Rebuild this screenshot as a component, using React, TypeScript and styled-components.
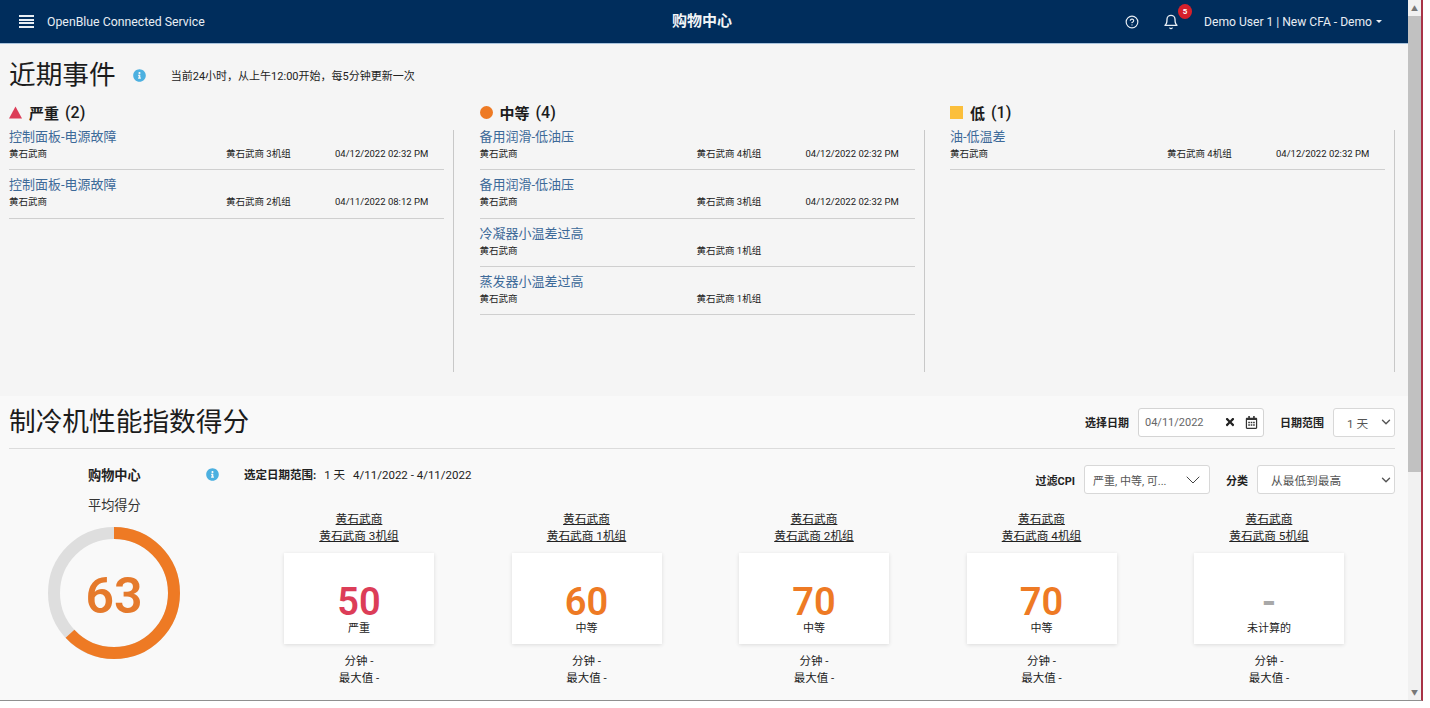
import React from 'react'
import styled, { createGlobalStyle } from 'styled-components'
import { ChevronDown } from 'lucide-react'
import { FaInfoCircle, FaRegCalendarAlt, FaTimes } from 'react-icons/fa'
import { FiBell, FiHelpCircle } from 'react-icons/fi'

const GlobalStyle = createGlobalStyle`
    html, body {
        margin: 0;
        padding: 0;
        height: 708px;
        overflow: hidden;
        background: #fff;
        font-family: Roboto, "Noto Sans CJK SC", sans-serif;
        color: #222;
    }
    * { box-sizing: border-box; }
`

type Level = 'high' | 'medium' | 'low' | 'none'

const levelColor: Record<Level, string> = {
    high: '#dc3d58',
    medium: '#ee7a24',
    low: '#fbbf3c',
    none: '#a8a8a8',
}

const columns = [
    {
        level: 'high' as Level,
        title: '严重',
        count: 2,
        events: [
            { name: '控制面板-电源故障', unit: '黄石武商 3机组', time: '04/12/2022 02:32 PM' },
            { name: '控制面板-电源故障', unit: '黄石武商 2机组', time: '04/11/2022 08:12 PM' },
        ],
    },
    {
        level: 'medium' as Level,
        title: '中等',
        count: 4,
        events: [
            { name: '备用润滑-低油压', unit: '黄石武商 4机组', time: '04/12/2022 02:32 PM' },
            { name: '备用润滑-低油压', unit: '黄石武商 3机组', time: '04/12/2022 02:32 PM' },
            { name: '冷凝器小温差过高', unit: '黄石武商 1机组', time: '' },
            { name: '蒸发器小温差过高', unit: '黄石武商 1机组', time: '' },
        ],
    },
    {
        level: 'low' as Level,
        title: '低',
        count: 1,
        events: [{ name: '油-低温差', unit: '黄石武商 4机组', time: '04/12/2022 02:32 PM' }],
    },
]

const chillers = [
    { unit: '黄石武商 3机组', score: '50', label: '严重', level: 'high' as Level },
    { unit: '黄石武商 1机组', score: '60', label: '中等', level: 'medium' as Level },
    { unit: '黄石武商 2机组', score: '70', label: '中等', level: 'medium' as Level },
    { unit: '黄石武商 4机组', score: '70', label: '中等', level: 'medium' as Level },
    { unit: '黄石武商 5机组', score: '-', label: '未计算的', level: 'none' as Level },
]

function LevelMark({ level }: { level: Level }) {
    return (
        <svg width="13" height="13" viewBox="0 0 13 13">
            {level === 'high' && <polygon points="6.5,0.5 13,12.5 0,12.5" fill={levelColor.high} />}
            {level === 'medium' && <circle cx="6.5" cy="6.5" r="6.5" fill={levelColor.medium} />}
            {level === 'low' && <rect width="13" height="13" fill={levelColor.low} />}
        </svg>
    )
}

function ScoreRing({ score }: { score: number }) {
    const r = 60
    const length = 2 * Math.PI * r
    return (
        <RingBox>
            <svg width="134" height="134" viewBox="0 0 134 134">
                <circle cx="67" cy="67" r={r} fill="none" stroke="#dedede" strokeWidth="12" />
                <circle
                    cx="67"
                    cy="67"
                    r={r}
                    fill="none"
                    stroke={levelColor.medium}
                    strokeWidth="12"
                    strokeDasharray={`${(length * score) / 100} ${length}`}
                    transform="rotate(-90 67 67)"
                />
            </svg>
            <RingValue>{score}</RingValue>
        </RingBox>
    )
}

export default function App() {
    return (
        <>
            <GlobalStyle />
            <Frame>
                <Page>
                    <Header>
                        <HeaderLeft>
                            <Burger>
                                <span />
                                <span />
                                <span />
                                <span />
                            </Burger>
                            <Brand>OpenBlue Connected Service</Brand>
                        </HeaderLeft>
                        <HeaderTitle>购物中心</HeaderTitle>
                        <HeaderRight>
                            <FiHelpCircle size={14} />
                            <BellBox>
                                <FiBell size={16} />
                                <Badge>5</Badge>
                            </BellBox>
                            <UserName>
                                Demo User 1 | New CFA - Demo
                                <Caret />
                            </UserName>
                        </HeaderRight>
                    </Header>

                    <EventsSection>
                        <TitleRow>
                            <BigTitle>近期事件</BigTitle>
                            <TitleInfo />
                            <Note>{'当前24小时\uFF0C从上午12:00开始\uFF0C每5分钟更新一次'}</Note>
                        </TitleRow>
                        <EventColumns>
                            {columns.map((col) => (
                                <EventColumn key={col.level}>
                                    <ColumnHead>
                                        <LevelMark level={col.level} />
                                        <ColumnTitle>{col.title}</ColumnTitle>
                                        <ColumnCount>({col.count})</ColumnCount>
                                    </ColumnHead>
                                    <EventList>
                                        {col.events.map((ev, i) => (
                                            <EventRow key={i}>
                                                <EventName>{ev.name}</EventName>
                                                <EventMeta>
                                                    <span>黄石武商</span>
                                                    <span>{ev.unit}</span>
                                                    <span>{ev.time}</span>
                                                </EventMeta>
                                            </EventRow>
                                        ))}
                                    </EventList>
                                </EventColumn>
                            ))}
                        </EventColumns>
                    </EventsSection>

                    <ScoreSection>
                        <ScoreHead>
                            <BigTitle>制冷机性能指数得分</BigTitle>
                            <Controls>
                                <ControlLabel>选择日期</ControlLabel>
                                <DateBox>
                                    <DateText>04/11/2022</DateText>
                                    <FaTimes size={12} color="#222" />
                                    <FaRegCalendarAlt size={13} color="#333" />
                                </DateBox>
                                <ControlLabel>日期范围</ControlLabel>
                                <SelectBox $width={62}>
                                    <span>1 天</span>
                                    <ChevronDown size={14} strokeWidth={2.4} color="#555" />
                                </SelectBox>
                            </Controls>
                        </ScoreHead>
                        <ScoreBody>
                            <Summary>
                                <SummaryTop>
                                    <SummaryName>购物中心</SummaryName>
                                    <InfoIcon />
                                </SummaryTop>
                                <SummarySub>平均得分</SummarySub>
                                <ScoreRing score={63} />
                            </Summary>
                            <Details>
                                <DetailsBar>
                                    <RangeText>
                                        <b>选定日期范围:</b>
                                        <span>1 天</span>
                                        <span>4/11/2022 - 4/11/2022</span>
                                    </RangeText>
                                    <Controls>
                                        <ControlLabel>过滤CPI</ControlLabel>
                                        <FilterBox>
                                            <span>严重, 中等, 可...</span>
                                            <ChevronDown size={24} strokeWidth={1} color="#444" />
                                        </FilterBox>
                                        <ControlLabel>分类</ControlLabel>
                                        <SelectBox $width={138}>
                                            <span>从最低到最高</span>
                                            <ChevronDown size={14} strokeWidth={2.4} color="#555" />
                                        </SelectBox>
                                    </Controls>
                                </DetailsBar>
                                <ChillerRow>
                                    {chillers.map((c) => (
                                        <Chiller key={c.unit}>
                                            <ChillerLink>
                                                黄石武商
                                                <br />
                                                {c.unit}
                                            </ChillerLink>
                                            <ScoreCard>
                                                <CardValue $level={c.level}>{c.score}</CardValue>
                                                <CardLabel>{c.label}</CardLabel>
                                            </ScoreCard>
                                            <ChillerStats>
                                                分钟 -
                                                <br />
                                                最大值 -
                                            </ChillerStats>
                                        </Chiller>
                                    ))}
                                </ChillerRow>
                            </Details>
                        </ScoreBody>
                    </ScoreSection>
                </Page>
                <Scrollbar>
                    <ScrollArrow>▲</ScrollArrow>
                    <ScrollThumb />
                    <ScrollTrack />
                    <ScrollArrow>▼</ScrollArrow>
                </Scrollbar>
            </Frame>
        </>
    )
}

const Frame = styled.div`
    width: 1423px;
    height: 701px;
    display: flex;
    border-right: 2px solid #a83246;
    border-bottom: 1px solid #8f8f8f;
    overflow: hidden;
`

const Page = styled.div`
    width: 1408px;
    flex-shrink: 0;
    display: flex;
    flex-direction: column;
    overflow: hidden;
`

const Scrollbar = styled.div`
    flex: 1;
    display: flex;
    flex-direction: column;
    background: #f1f1f1;
`

const ScrollArrow = styled.div`
    height: 16px;
    display: flex;
    align-items: center;
    justify-content: center;
    font-size: 7px;
    color: #777;
`

const ScrollThumb = styled.div`
    height: 456px;
    background: #c1c1c1;
`

const ScrollTrack = styled.div`
    flex: 1;
`

const Header = styled.header`
    height: 44px;
    flex-shrink: 0;
    position: relative;
    display: flex;
    align-items: center;
    justify-content: space-between;
    padding: 0 26px 0 19px;
    background: #002d5c;
    border-bottom: 1px solid #a9c3dc;
    color: #e8eef4;
`

const HeaderLeft = styled.div`
    display: flex;
    align-items: center;
    gap: 13px;
`

const Burger = styled.div`
    width: 15px;
    display: flex;
    flex-direction: column;
    gap: 1.4px;

    span {
        height: 2px;
        background: #e8eef4;
    }
`

const Brand = styled.div`
    font-size: 12.3px;
    white-space: nowrap;
`

const HeaderTitle = styled.div`
    position: absolute;
    left: 0;
    right: 4px;
    top: 11px;
    text-align: center;
    font-size: 15px;
    line-height: 20px;
    font-weight: 700;
    color: #f1f4f7;
    pointer-events: none;
`

const HeaderRight = styled.div`
    display: flex;
    align-items: center;
    position: relative;
`

const BellBox = styled.div`
    position: relative;
    display: flex;
    margin: 0 25px 0 24px;
`

const Badge = styled.span`
    position: absolute;
    top: -10px;
    right: -13px;
    width: 14px;
    height: 15px;
    border-radius: 50%;
    background: #d6202b;
    color: #fff;
    font-size: 8px;
    font-weight: 700;
    text-align: center;
    line-height: 15px;
`

const UserName = styled.div`
    display: flex;
    align-items: center;
    gap: 4px;
    font-size: 12.1px;
    white-space: nowrap;
`

const Caret = styled.i`
    width: 0;
    height: 0;
    border-left: 3.5px solid transparent;
    border-right: 3.5px solid transparent;
    border-top: 3.5px solid #e8eef4;
`

const EventsSection = styled.section`
    height: 352px;
    flex-shrink: 0;
    padding: 13px 9px 0;
    background: #f5f5f5;
`

const TitleRow = styled.div`
    display: flex;
    align-items: center;
    height: 36px;
`

const BigTitle = styled.h1`
    margin: 0;
    font-size: 26.7px;
    font-weight: 400;
    line-height: 36px;
    color: #1c1c1c;
    white-space: nowrap;
`

const InfoIcon = styled(FaInfoCircle)`
    width: 13px;
    height: 13px;
    color: #4cb0e0;
    flex-shrink: 0;
`

const TitleInfo = styled(InfoIcon)`
    margin-left: 17px;
`

const Note = styled.div`
    font-size: 11px;
    margin-left: 25px;
    color: #222;
`

const EventColumns = styled.div`
    display: grid;
    grid-template-columns: repeat(3, 435px);
    column-gap: 35.5px;
    margin-top: 9px;
`

const EventColumn = styled.div`
    display: flex;
    flex-direction: column;
`

const ColumnHead = styled.div`
    height: 20px;
    display: flex;
    align-items: center;
    gap: 7px;
    font-size: 15px;
    color: #1c1c1c;
`

const ColumnTitle = styled.span`
    font-weight: 700;
`

const ColumnCount = styled.span`
    font-size: 16px;
    font-weight: 500;
    margin-left: -1px;
`

const EventList = styled.div`
    position: relative;
    height: 250px;

    &::after {
        content: '';
        position: absolute;
        top: 8px;
        bottom: 0;
        right: -10px;
        width: 1px;
        background: #c8c8c8;
    }
`

const EventRow = styled.div`
    height: 48.3px;
    padding-top: 7px;
    border-bottom: 1px solid #cfcfcf;
`

const EventName = styled.div`
    font-size: 13px;
    line-height: 16px;
    color: #3d6a99;
`

const EventMeta = styled.div`
    display: grid;
    grid-template-columns: 217px 109px 1fr;
    margin-top: 2px;
    font-size: 9.5px;
    line-height: 14px;
    color: #222;
`

const ScoreSection = styled.section`
    flex: 1;
    padding: 0 13px 0 9px;
    background: #f9f9f9;
`

const ScoreHead = styled.div`
    height: 53px;
    display: flex;
    align-items: center;
    justify-content: space-between;
    border-bottom: 1px solid #dcdcdc;
`

const Controls = styled.div`
    display: flex;
    align-items: center;
`

const ControlLabel = styled.span`
    font-size: 11px;
    font-weight: 700;
    margin: 0 9px 0 16px;
    white-space: nowrap;
    color: #222;
`

const DateBox = styled.div`
    width: 126px;
    height: 29px;
    display: flex;
    align-items: center;
    gap: 9px;
    padding: 0 5px 0 6px;
    background: #fff;
    border: 1px solid #d4d4d4;
    border-radius: 3px;
`

const DateText = styled.span`
    flex: 1;
    font-size: 11px;
    color: #666;
`

const SelectBox = styled.div<{ $width: number }>`
    width: ${(p) => p.$width}px;
    height: 29px;
    display: flex;
    align-items: center;
    justify-content: space-between;
    padding: 0 1px 0 13px;
    background: #fff;
    border: 1px solid #d8d8d8;
    border-radius: 3px;
    font-size: 11.7px;
    color: #555;
`

const FilterBox = styled.div`
    width: 126px;
    height: 29px;
    display: flex;
    align-items: center;
    justify-content: space-between;
    padding: 0 4px 0 8px;
    background: #fff;
    border: 1px solid #d8d8d8;
    border-radius: 3px;
    font-size: 11px;
    color: #555;
    white-space: nowrap;
`

const ScoreBody = styled.div`
    display: flex;
`

const Summary = styled.div`
    width: 235px;
    flex-shrink: 0;
    display: flex;
    flex-direction: column;
    padding-top: 15px;
`

const SummaryTop = styled.div`
    display: flex;
    align-items: center;
    justify-content: space-between;
    padding: 0 25px 0 79px;
    height: 20px;
`

const SummaryName = styled.span`
    font-size: 13.2px;
    font-weight: 700;
`

const SummarySub = styled.div`
    font-size: 13.2px;
    line-height: 20px;
    margin: 12px 0 0 79px;
    color: #333;
`

const RingBox = styled.div`
    position: relative;
    width: 134px;
    height: 134px;
    margin: 10px 0 0 38px;
`

const RingValue = styled.div`
    position: absolute;
    inset: 6px 0 0;
    display: flex;
    align-items: center;
    justify-content: center;
    font-size: 50px;
    font-weight: 600;
    color: #e57a2c;
`

const Details = styled.div`
    flex: 1;
    display: flex;
    flex-direction: column;
`

const DetailsBar = styled.div`
    display: flex;
    justify-content: space-between;
    align-items: flex-start;
    height: 62px;
    padding-top: 16px;
`

const RangeText = styled.div`
    display: flex;
    gap: 8px;
    margin-top: 1px;
    font-size: 11.5px;
    line-height: 18px;
    color: #222;

    b {
        font-weight: 700;
    }
`

const ChillerRow = styled.div`
    display: grid;
    grid-template-columns: repeat(5, 150px);
    column-gap: 77.5px;
    padding-left: 40px;
`

const Chiller = styled.div`
    display: flex;
    flex-direction: column;
    align-items: center;
    text-align: center;
`

const ChillerLink = styled.a`
    font-size: 11.7px;
    line-height: 17px;
    color: #222;
    text-decoration: underline;
    white-space: nowrap;
`

const ScoreCard = styled.div`
    width: 150px;
    height: 91px;
    margin-top: 8px;
    display: flex;
    flex-direction: column;
    align-items: center;
    justify-content: flex-end;
    padding-bottom: 8px;
    background: #fff;
    box-shadow: 0 1px 4px rgba(0, 0, 0, 0.12);
`

const CardValue = styled.div<{ $level: Level }>`
    font-size: 38px;
    font-weight: 600;
    line-height: 40px;
    color: ${(p) => levelColor[p.$level]};
`

const CardLabel = styled.div`
    font-size: 11px;
    line-height: 14px;
    color: #222;
`

const ChillerStats = styled.div`
    margin-top: 9px;
    font-size: 11.5px;
    line-height: 17px;
    color: #222;
    white-space: nowrap;
`
